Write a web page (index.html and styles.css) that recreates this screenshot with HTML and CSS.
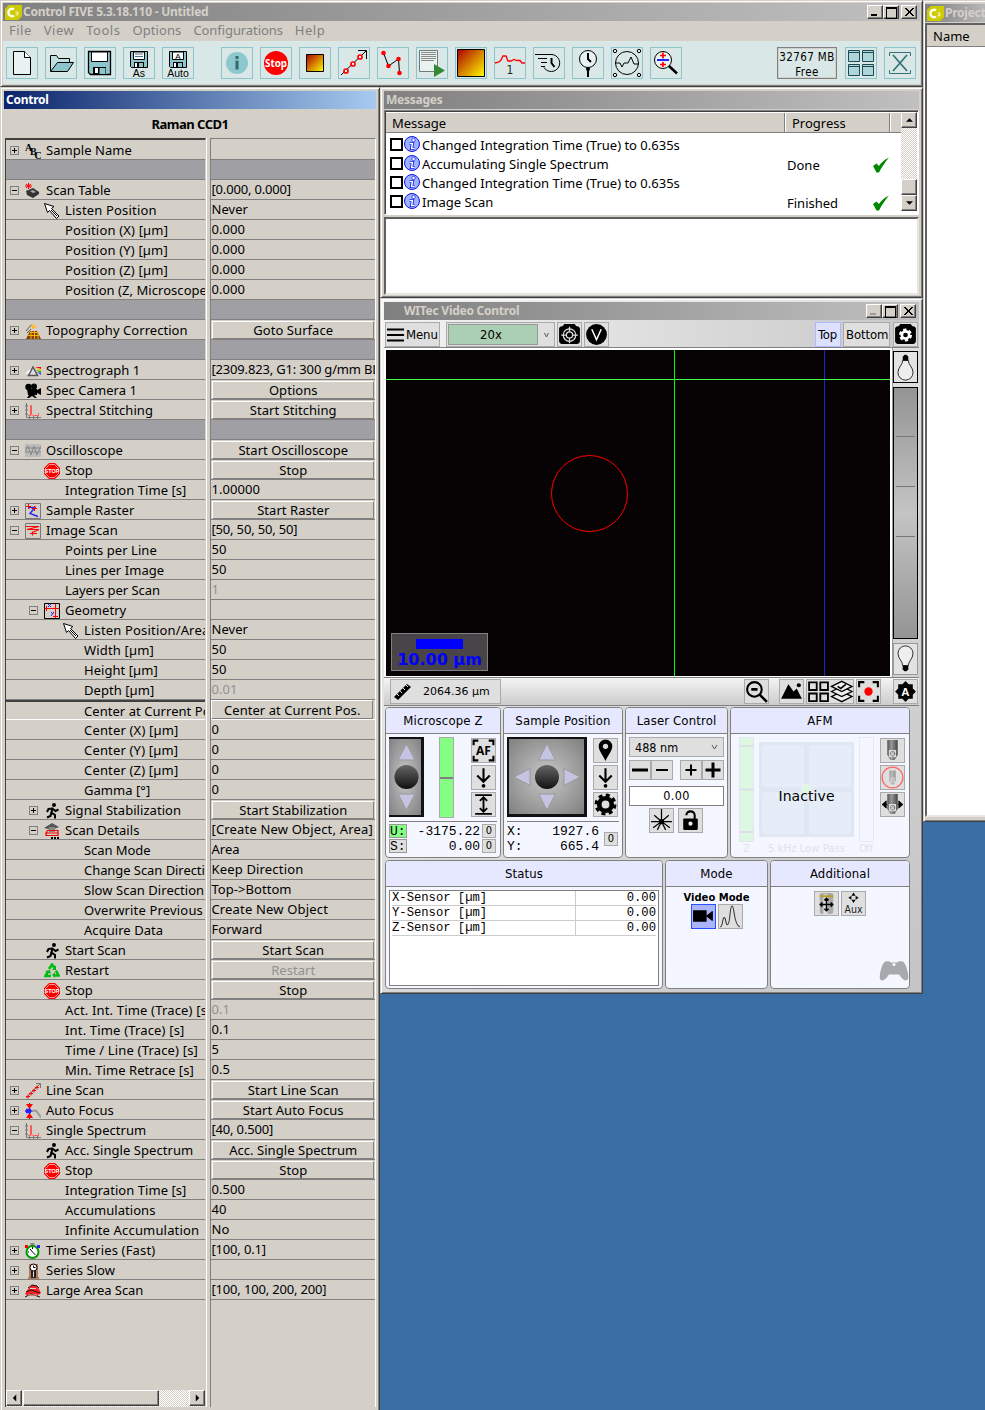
FILE: index.html
```html
<!DOCTYPE html>
<html lang="en">
<head>
<meta charset="utf-8">
<title>Control FIVE</title>
<link rel="stylesheet" href="styles.css">
</head>
<body>
<svg class="defs" width="0" height="0">
<defs>
<linearGradient id="heat" x1="0" y1="0" x2="1" y2="1"><stop offset="0" stop-color="#a00"/><stop offset="1" stop-color="#ff0"/></linearGradient>
<radialGradient id="stick" cx=".5" cy=".5" r=".7"><stop offset="0" stop-color="#c8c8c8"/><stop offset="1" stop-color="#808080"/></radialGradient>
<linearGradient id="ball" x1="0" y1="0" x2="0" y2="1"><stop offset="0" stop-color="#666"/><stop offset="1" stop-color="#111"/></linearGradient>
<linearGradient id="metal" x1="0" y1="0" x2="1" y2="0"><stop offset="0" stop-color="#555"/><stop offset=".4" stop-color="#999"/><stop offset="1" stop-color="#444"/></linearGradient>
</defs>
</svg>
<svg class="sprites">
<symbol id="abc" viewBox="0 0 16 16"><g font-family="Liberation Serif" font-weight="bold" font-size="10"><text x="0" y="8">A</text><text x="5" y="12">B</text><text x="9.500" y="16">C</text></g></symbol>
<symbol id="table" viewBox="0 0 16 16"><path d="M1 8l7-3 6 4v2l-6 4-6-3z" fill="#333"/><path d="M5 8l3-1 3 2-3 1z" fill="#aaa"/><path d="M3.500 0v6M0 3h7M1 1l5 4M6 1L1 5" stroke="red"/></symbol>
<symbol id="arrow" viewBox="0 0 16 16"><path d="M.5.5l3 9 2-2 7 8 2.500-2.500-7.500-7.500 2.500-2z" fill="#fff" stroke="#000"/><path d="M7 7l6 6" stroke="#000"/></symbol>
<symbol id="topo" viewBox="0 0 16 16"><path d="M1 16l4-8h7l4 8z" fill="#8a3d0b"/><path d="M3 12.500h11M5 9.500h8M6 8v8M9.500 8v8M13 10v6" stroke="#eb0"/><path d="M1 8l6-7M2 10l4-4" stroke="#555"/><path d="M6 2l4 2M7 5l4-2" stroke="#fb3" stroke-width="2"/></symbol>
<symbol id="prism" viewBox="0 0 16 16"><path d="M0 11l5-5v4z" fill="#fff"/><path d="M10 4h6v2z" fill="red"/><path d="M10 5l6 1v2z" fill="#fc0"/><path d="M11 7l5 1v2z" fill="#0b0"/><path d="M12 9l4 1v2z" fill="#33f"/><path d="M3.500 12.500L8 4l4.500 8.500z" fill="#ddd" stroke="#555" stroke-width="1.500"/></symbol>
<symbol id="camera" viewBox="0 0 16 16"><circle cx="3.500" cy="4" r="3.200"/><circle cx="9" cy="3.500" r="3"/><path d="M2 6h10v1l4-2v7l-4-2v2H9l3 3h-2l-3-2-3 2H2l2-3H3z"/></symbol>
<symbol id="spec" viewBox="0 0 16 16"><path d="M1.500 0v14.500H16" stroke="#777" fill="none"/><path d="M0 3h3M0 7h3M0 11h3M4.500 13v3M8.500 13v3M12.500 13v3" stroke="#777"/><path d="M3 12.500h2.500V2.500h1v9l2 1h5V10" stroke="#f55" fill="none"/></symbol>
<symbol id="osc" viewBox="0 0 16 16"><path d="M0 1h16v13H0z" fill="#bbb"/><path d="M0 9l3-6 3 9 3-9 3 9 4-9M0 5h16M0 9h16" stroke="#888" fill="none"/></symbol>
<symbol id="stop" viewBox="0 0 16 16"><path d="M5 0h6l5 5v6l-5 5H5l-5-5V5z" fill="red"/><path d="M5.500 1.500h5l4 4v5l-4 4h-5l-4-4v-5z" fill="none" stroke="#fff" stroke-width=".6"/><text x="8" y="10.200" font-family="Liberation Sans" font-weight="bold" font-size="5.500" fill="#fff" text-anchor="middle">STOP</text></symbol>
<symbol id="raster" viewBox="0 0 16 16"><path d="M.5.5h15v15H.5z" fill="none" stroke="#777"/><path d="M4 4.500h6l-5 6 8 3" fill="none" stroke="#22f" stroke-width="1.400"/><path d="M1 3.500h5M3.500 1v5M7 5.500h5M9.500 3v5" stroke="red"/></symbol>
<symbol id="iscan" viewBox="0 0 16 16"><path d="M.5.5h15v15H.5z" fill="none" stroke="#777"/><path d="M1 3.500h13L2 6.500h12L5 10.500h7M7.500 8.500v4" fill="none" stroke="red" stroke-width="1.200"/></symbol>
<symbol id="geom" viewBox="0 0 16 16"><path d="M.5.5h15v15H.5z" fill="none" stroke="#000"/><path d="M1 5.500h14M11.500 1v14M2.500 3v5M9 13.500h5" stroke="red"/><path d="M4 1l3 3M7 1L4 4M7 9l2 2M10 9l-3 4" stroke="#22f"/></symbol>
<symbol id="run" viewBox="0 0 16 16"><circle cx="10" cy="2" r="2"/><path d="M8.500 4.500L7.500 9.500 11 12v3.500M7.500 9l-1 4L3 14.500M8.500 5.500L4.500 6 3 9M9 6l2.500 2 3-1.500" stroke="#000" stroke-width="2" fill="none"/></symbol>
<symbol id="details" viewBox="0 0 16 16"><path d="M0 5l8-5 7 4-7 3z" fill="#555"/><path d="M5 4h6v5H5z" fill="#888"/><path d="M3 7.500h11v5H2l1-5M1 10h13" fill="none" stroke="#e00" stroke-width="1.200"/><path d="M7 14h2v2H7zM10 14h2v2h-2zM13 14h2v2h-2z"/></symbol>
<symbol id="recycle" viewBox="0 0 16 16"><path d="M5 6l3-4.500L10.500 5M12 7.500l2.500 5H10M7 13H1.500L4 8.500" stroke="#0b1" stroke-width="2.600" fill="none"/><path d="M12 2v5H8zM11 9v6l-3-3zM1 8l5-1 1 4z" fill="#0b1"/></symbol>
<symbol id="line" viewBox="0 0 16 16"><path d="M1 15L15 1M11 .5h4.500V5" stroke="#777" fill="none"/><path d="M1 13.500h4M3 11.500v4M4 10.500h4M6 8.500v4M7 7.500h4M9 5.500v4M10 4.500h4M12 2.500v4" stroke="red"/></symbol>
<symbol id="focus" viewBox="0 0 16 16"><path d="M4.500 0v16" stroke="#333"/><path d="M1 1h7L4.500 6zM1 15h7l-3.500-5z" fill="red"/><path d="M0 8h8M1 6.500h5M1 9.500h5" stroke="#22f" stroke-width="1.500"/><path d="M7 8l4-.5 5 7" stroke="#999" stroke-width="2" fill="none"/></symbol>
<symbol id="timer" viewBox="0 0 16 16"><path d="M5.500 0h4v3h-4z" fill="#888"/><circle cx="7.500" cy="9" r="6" fill="#fff" stroke="#090" stroke-width="2"/><path d="M7.500 9L5 6M7.500 9l3 3M7.500 4v2M3 9h1" stroke="#000"/><path d="M0 2h3v3H0z" fill="red"/><path d="M12 2h3v3h-3z" fill="#22f"/></symbol>
<symbol id="slow" viewBox="0 0 16 16"><path d="M4 1h9v13h1v2H3v-2h1z" fill="#b47858"/><path d="M6 8h5v7H6z" fill="#222"/><path d="M8.500 8v6" stroke="#ddd"/><circle cx="8.500" cy="4.500" r="3.500" fill="#fff" stroke="#000"/><path d="M8.500 2.500v2h2" stroke="#000" fill="none"/></symbol>
<symbol id="area" viewBox="0 0 16 16"><path d="M0 11l3-5 4-4h4l3 4 2 4-4 3H3z" fill="#f22"/><path d="M3 5l4-3 5 1 2 2M1 9l5-2 9 3M0 14l6-3 9 3" stroke="#111" fill="none"/><path d="M3 12h9M5 5.500h6" stroke="#d4d0c8"/></symbol>
<symbol id="logo" viewBox="0 0 18 18"><path d="M4 1h14v12l-4 4H0V5z" fill="#cc0"/><path d="M9.500 5.500a4 4 0 1 0 0 7" fill="none" stroke="#fff" stroke-width="2.500"/><path d="M11 8.500h2.500v3H11" fill="none" stroke="#fff"/></symbol>
<symbol id="info" viewBox="0 0 16 16"><circle cx="8" cy="8" r="7.500" fill="#9bb4ff" stroke="#11e"/><circle cx="9.500" cy="4" r="1.700" fill="#fff" stroke="#11e" stroke-width=".7"/><path d="M5.500 7.500h3L7.500 12.500h3" fill="none" stroke="#11e" stroke-width="3"/><path d="M5.500 7.500h3L7.500 12.500h3" fill="none" stroke="#fff" stroke-width="1.400"/></symbol>
<symbol id="check" viewBox="0 0 18 16"><path d="M1 9l3.500-2.500L7 9c3-4 5-6 10-8.500-4 5-7 9-10 15H4.500z" fill="#080"/></symbol>
<symbol id="down" viewBox="0 0 24 24"><path d="M12 3v13M6 10l6 6 6-6" fill="none" stroke="#000" stroke-width="2"/><circle cx="12" cy="20" r="1.800"/></symbol>
<symbol id="bulb" viewBox="0 0 24 32"><path d="M9 23c0-5-5-7-5-13a8 8 0 0 1 16 0c0 6-5 8-5 13z" fill="#eee" stroke="#222"/><path d="M9 23h6v4l-2 2h-2l-2-2z"/></symbol>
<symbol id="probe" viewBox="0 0 24 24"><path d="M7 2h10v14l-3 5h-4l-3-5z" fill="url(#metal)"/><path d="M9 12h6v6H9zM9 12l6 6M15 12l-6 6" fill="none" stroke="#ddd"/></symbol>
</svg>

<div class="left">
<section class="win main-win">
  <header class="bar"><svg class="logo"><use href="#logo"/></svg><span>Control FIVE 5.3.18.110 - Untitled</span><span class="btns"><i class="min"></i><i class="max"></i><i class="x"></i></span></header>
  <nav class="menu"><span>File</span><span>View</span><span>Tools</span><span class="opt">Options</span><span class="cfg">Configurations</span><span>Help</span></nav>
  <div class="tools">
    <svg class="tb" viewBox="0 0 32 32"><path d="M7.500 4.500h11l6 6v17h-17z" fill="#e8f2f0" stroke="#000"/><path d="M18.500 4.500v6h6" fill="#fff" stroke="#000"/></svg>
    <svg class="tb" viewBox="0 0 32 32"><path d="M5.500 24V8.500h6l2 3h11v4" fill="#bfdfe0" stroke="#000"/><path d="M5.500 24.500l7-9h16l-6 9z" fill="#8cc5cc" stroke="#000"/></svg>
    <svg class="tb" viewBox="0 0 32 32"><path d="M4.500 4.500h22v23h-20l-2-2z" fill="#8cc5cc" stroke="#000" stroke-width="1.300"/><path d="M7.500 5h16v9.500h-16z" fill="#fff" stroke="#000"/><path d="M9 20h13v7H9z"/><path d="M15.500 21h6v6h-6z" fill="#8cc5cc"/><path d="M11 21h3v5h-3z" fill="#fff"/></svg>
    <svg class="tb" viewBox="0 0 32 32"><path d="M7.500 4.500h17v16h-16l-1-1z" fill="#8cc5cc" stroke="#000"/><path d="M10.500 5h11v7.500h-11z" fill="#fff" stroke="#000"/><path d="M12 7h8M12 9.500h8" stroke="#478"/><path d="M11 15h10v5H11z"/><path d="M16 16h4v4h-4z" fill="#8cc5cc"/><path d="M12 16h2v4h-2z" fill="#fff"/><text class="ic" x="16" y="30">As</text></svg>
    <svg class="tb" viewBox="0 0 32 32"><path d="M7.500 4.500h17v16h-16l-1-1z" fill="#8cc5cc" stroke="#000"/><path d="M10.500 5h11v7.500h-11z" fill="#fff" stroke="#000"/><text class="ic sm" x="16" y="12">A</text><path d="M11 15h10v5H11z"/><path d="M16 16h4v4h-4z" fill="#8cc5cc"/><path d="M12 16h2v4h-2z" fill="#fff"/><text class="ic" x="16" y="30">Auto</text></svg>
    <svg class="tb gapl" viewBox="0 0 32 32"><circle cx="16" cy="16" r="11" fill="#8cc8ce"/><path d="M14.500 9h3v3h-3zM14.500 13.500h3v9h-3z" fill="#356970"/></svg>
    <svg class="tb" viewBox="0 0 32 32"><circle cx="16" cy="16" r="12" fill="red"/><text x="16" y="20" font-size="10.500" font-weight="bold" fill="#fff" text-anchor="middle" font-family="Noto Sans" textLength="22" lengthAdjust="spacingAndGlyphs">Stop</text></svg>
    <svg class="tb" viewBox="0 0 32 32"><path d="M7.500 7.500h17v17h-17z" fill="url(#heat)" stroke="#000"/></svg>
    <svg class="tb" viewBox="0 0 32 32"><path d="M3 28L28 4M20 3.500h8.500V12" fill="none" stroke="#000"/><g fill="#fff" stroke="red" stroke-width="1.700"><circle cx="8" cy="24" r="2"/><circle cx="15" cy="17" r="2"/><circle cx="22" cy="10" r="2"/></g></svg>
    <svg class="tb" viewBox="0 0 32 32"><path d="M6.500 6l5 13 10-7 1 14" fill="none" stroke="#000"/><g fill="red"><circle cx="6.500" cy="6" r="2.300"/><circle cx="11.500" cy="19" r="2.300"/><circle cx="21.500" cy="12" r="2.300"/><circle cx="22.500" cy="26" r="2.300"/></g></svg>
    <svg class="tb" viewBox="0 0 32 32"><path d="M3.500 3.500h18v21h-18z" fill="#e8f2f0" stroke="#777"/><path d="M5 5.500h15M5 7.500h15M5 9.500h15M5 11.500h15M5 13.500h13" stroke="#888"/><path d="M18 17l11 6.500L18 30z" fill="#383"/></svg>
    <svg class="tb" viewBox="0 0 32 32"><path d="M2.500 2.500h27v27h-27z" fill="url(#heat)" stroke="#000"/></svg>
    <svg class="tb" viewBox="0 0 32 32"><path d="M1 16l4-1 2-2 2-4 3 0 2 5h3l3-1.500 3 1 3 0 2 2.500h3" fill="none" stroke="red" stroke-width="1.300"/><text x="16" y="27" font-size="12" fill="#222" text-anchor="middle" font-family="DejaVu Sans Condensed">1</text></svg>
    <svg class="tb" viewBox="0 0 32 32"><path d="M2 7.500h15M5 11.500h9M8 15.500h6M8 19.500h4M10 7.500h8a8.500 8.500 0 1 1-7 13" fill="none" stroke="#000"/><path d="M18.500 11v5l3 4" stroke="#000" stroke-width="2" fill="none"/></svg>
    <svg class="tb" viewBox="0 0 32 32"><circle cx="16" cy="12" r="8.500" fill="#e8f2f0" stroke="#000"/><path d="M16 6v6l3 3M16 21v9" stroke="#000" stroke-width="2" fill="none"/><circle cx="16" cy="22" r="2"/></svg>
    <svg class="tb" viewBox="0 0 32 32"><circle cx="16" cy="16" r="11.500" fill="none" stroke="#000"/><path d="M4 16h5l2 4 2-4h4l3-6 3 7h5" fill="none" stroke="#000"/><g fill="none" stroke="#000"><circle cx="4" cy="4" r="1.700"/><circle cx="28" cy="4" r="1.700"/><circle cx="4" cy="28" r="1.700"/><circle cx="28" cy="28" r="1.700"/></g></svg>
    <svg class="tb" viewBox="0 0 32 32"><circle cx="13" cy="13" r="8.500" fill="#e8f2f0" stroke="#000"/><path d="M19 19l8 7.500" stroke="#000" stroke-width="2.500"/><path d="M7 13h12" stroke="#22f" stroke-width="2"/><path d="M10 8.500h6M13 5.500v6M10 17.500h6M13 15v5" stroke="red" stroke-width="1.700"/></svg>
    <div class="mem">32767 MB<br>Free</div>
    <svg class="tb" viewBox="0 0 32 32"><g fill="#add5da" stroke="#1d4a50"><path d="M3.500 3.500h11v11h-11zM17.500 3.500h11v11h-11zM3.500 17.500h11v11h-11zM17.500 17.500h11v11h-11z"/><path d="M3 5.500h12M17 5.500h12M3 19.500h12M17 19.500h12"/></g></svg>
    <svg class="tb last" viewBox="0 0 32 32"><path d="M5.500 9V5.500h21V9M5.500 23v3.500h21V23" fill="none" stroke="#347278"/><path d="M9 8l14 16M23 8L9 24" stroke="#347278" stroke-width="1.700"/></svg>
  </div>
</section>
<div class="cols">
<section class="win control">
  <header class="bar active"><span>Control</span></header>
  <h1>Raman CCD1</h1>
  <div class="tree">
  <div class="names">
    <p class="a"><b class="p"></b><svg><use href="#abc"/></svg>Sample Name</p>
    <p class="sep"></p>
    <p class="a"><b></b><svg><use href="#table"/></svg>Scan Table</p>
    <p class="b i w"><svg><use href="#arrow"/></svg>Listen Position</p>
    <p class="b n w">Position (X) [µm]</p>
    <p class="b n w">Position (Y) [µm]</p>
    <p class="b n w">Position (Z) [µm]</p>
    <p class="b n">Position (Z, Microscope)</p>
    <p class="sep"></p>
    <p class="a"><b class="p"></b><svg><use href="#topo"/></svg>Topography Correction</p>
    <p class="sep"></p>
    <p class="a"><b class="p"></b><svg><use href="#prism"/></svg>Spectrograph 1</p>
    <p class="a i"><svg><use href="#camera"/></svg>Spec Camera 1</p>
    <p class="a"><b class="p"></b><svg><use href="#spec"/></svg>Spectral Stitching</p>
    <p class="sep"></p>
    <p class="a"><b></b><svg><use href="#osc"/></svg>Oscilloscope</p>
    <p class="b i"><svg><use href="#stop"/></svg>Stop</p>
    <p class="b n">Integration Time [s]</p>
    <p class="a"><b class="p"></b><svg><use href="#raster"/></svg>Sample Raster</p>
    <p class="a"><b></b><svg><use href="#iscan"/></svg>Image Scan</p>
    <p class="b n">Points per Line</p>
    <p class="b n">Lines per Image</p>
    <p class="b n t">Layers per Scan</p>
    <p class="b"><b></b><svg><use href="#geom"/></svg>Geometry</p>
    <p class="c i w"><svg><use href="#arrow"/></svg>Listen Position/Area</p>
    <p class="c n w">Width [µm]</p>
    <p class="c n">Height [µm]</p>
    <p class="c n">Depth [µm]</p>
    <p class="c n sel">Center at Current Pos.</p>
    <p class="c n w">Center (X) [µm]</p>
    <p class="c n w">Center (Y) [µm]</p>
    <p class="c n w">Center (Z) [µm]</p>
    <p class="c n">Gamma [°]</p>
    <p class="b"><b class="p"></b><svg><use href="#run"/></svg>Signal Stabilization</p>
    <p class="b"><b></b><svg><use href="#details"/></svg>Scan Details</p>
    <p class="c n t">Scan Mode</p>
    <p class="c n t">Change Scan Direction</p>
    <p class="c n">Slow Scan Direction</p>
    <p class="c n w">Overwrite Previous</p>
    <p class="c n">Acquire Data</p>
    <p class="b i t"><svg><use href="#run"/></svg>Start Scan</p>
    <p class="b i"><svg><use href="#recycle"/></svg>Restart</p>
    <p class="b i"><svg><use href="#stop"/></svg>Stop</p>
    <p class="b n w">Act. Int. Time (Trace) [s]</p>
    <p class="b n w">Int. Time (Trace) [s]</p>
    <p class="b n w">Time / Line (Trace) [s]</p>
    <p class="b n">Min. Time Retrace [s]</p>
    <p class="a"><b class="p"></b><svg><use href="#line"/></svg>Line Scan</p>
    <p class="a"><b class="p"></b><svg><use href="#focus"/></svg>Auto Focus</p>
    <p class="a"><b></b><svg><use href="#spec"/></svg>Single Spectrum</p>
    <p class="b i"><svg><use href="#run"/></svg>Acc. Single Spectrum</p>
    <p class="b i"><svg><use href="#stop"/></svg>Stop</p>
    <p class="b n">Integration Time [s]</p>
    <p class="b n">Accumulations</p>
    <p class="b n w">Infinite Accumulation</p>
    <p class="a w"><b class="p"></b><svg><use href="#timer"/></svg>Time Series (Fast)</p>
    <p class="a"><b class="p"></b><svg><use href="#slow"/></svg>Series Slow</p>
    <p class="a t"><b class="p"></b><svg><use href="#area"/></svg>Large Area Scan</p>
    <div class="hscroll"><i class="sb"><svg viewBox="0 0 8 8"><path d="M6 0v8L2 4z"/></svg></i><i class="thumb"></i><i class="sb end"><svg viewBox="0 0 8 8"><path d="M2 0v8l4-4z"/></svg></i></div>
  </div>
  <div class="values">
    <p></p><p class="sep"></p><p class="g">[0.000, 0.000]</p><p>Never</p><p>0.000</p><p>0.000</p><p>0.000</p><p>0.000</p><p class="sep"></p>
    <p class="btn"><span>Goto Surface</span></p><p class="sep"></p><p class="g">[2309.823, G1: 300 g/mm BLZ]</p>
    <p class="btn"><span>Options</span></p><p class="btn"><span>Start Stitching</span></p><p class="sep"></p>
    <p class="btn"><span>Start Oscilloscope</span></p><p class="btn"><span>Stop</span></p><p>1.00000</p><p class="btn"><span>Start Raster</span></p>
    <p class="g">[50, 50, 50, 50]</p><p>50</p><p>50</p><p class="dim">1</p><p></p><p>Never</p><p>50</p><p>50</p><p class="dim">0.01</p>
    <p class="btn cur"><span>Center at Current Pos.</span></p><p>0</p><p>0</p><p>0</p><p>0</p>
    <p class="btn"><span>Start Stabilization</span></p><p class="w">[Create New Object, Area]</p><p>Area</p><p class="w">Keep Direction</p><p>Top-&gt;Bottom</p><p class="w">Create New Object</p><p>Forward</p>
    <p class="btn"><span>Start Scan</span></p><p class="btn dim"><span>Restart</span></p><p class="btn"><span>Stop</span></p>
    <p class="dim">0.1</p><p>0.1</p><p>5</p><p>0.5</p><p class="btn"><span>Start Line Scan</span></p><p class="btn"><span>Start Auto Focus</span></p><p class="g">[40, 0.500]</p>
    <p class="btn"><span>Acc. Single Spectrum</span></p><p class="btn"><span>Stop</span></p><p>0.500</p><p>40</p><p>No</p><p class="g">[100, 0.1]</p><p></p><p class="g">[100, 100, 200, 200]</p>
  </div>
  </div>
</section>
<div class="right-col">
<section class="win messages">
  <header class="bar"><span>Messages</span></header>
  <div class="mlist">
    <div class="mtable">
      <div class="mhead"><span>Message</span><span>Progress</span><span></span></div>
      <div class="mrow"><i></i><svg class="inf"><use href="#info"/></svg><span>Changed Integration Time (True) to 0.635s</span></div>
      <div class="mrow"><i></i><svg class="inf"><use href="#info"/></svg><span>Accumulating Single Spectrum</span><em>Done</em><svg class="chk"><use href="#check"/></svg></div>
      <div class="mrow"><i></i><svg class="inf"><use href="#info"/></svg><span>Changed Integration Time (True) to 0.635s</span></div>
      <div class="mrow"><i></i><svg class="inf"><use href="#info"/></svg><span>Image Scan</span><em>Finished</em><svg class="chk"><use href="#check"/></svg></div>
    </div>
    <div class="vscroll"><i class="sb"><svg viewBox="0 0 8 8"><path d="M0 6h8L4 2z"/></svg></i><i class="thumb"></i><i class="sb"><svg viewBox="0 0 8 8"><path d="M0 2h8L4 6z"/></svg></i></div>
  </div>
  <div class="mtext"></div>
</section>
<section class="win video">
  <header class="bar"><span>WITec Video Control</span><span class="btns"><i class="min off"></i><i class="max"></i><i class="x"></i></span></header>
  <div class="vtools">
    <div class="vb menu-b"><svg width="17" height="14" viewBox="0 0 17 14"><path d="M0 1.500h17M0 7h17M0 12.500h17" stroke="#000" stroke-width="2.200"/></svg>Menu</div>
    <div class="combo"><span>20x</span><svg width="7" height="6" viewBox="0 0 7 6"><path d="M1.500 1L3.500 5l2-4" fill="none" stroke="#555"/></svg></div>
    <svg class="vb" viewBox="0 0 24 24"><rect x="2" y="4" width="20" height="17" rx="3"/><path d="M7 2h10l3 4H4z"/><g fill="none" stroke="#ddd" stroke-width="1.200"><circle cx="12" cy="12.500" r="6"/><circle cx="12" cy="12.500" r="3"/><path d="M12 4.500v5M12 15.500v5M4 12.500h5M15 12.500h5"/></g></svg>
    <svg class="vb" viewBox="0 0 24 24"><circle cx="12" cy="12" r="10"/><path d="M7.500 7l4.500 10 4.500-10" fill="none" stroke="#fff" stroke-width="1.500"/></svg>
    <div class="vb top-b">Top</div><div class="vb bot-b">Bottom</div>
    <svg class="vb camg" viewBox="0 0 24 24"><rect x="2" y="4" width="20" height="17" rx="3"/><path d="M7 2h10l3 4H4z"/><circle cx="12" cy="12.500" r="5" fill="none" stroke="#fff" stroke-width="2.500" stroke-dasharray="3 2.200"/><circle cx="12" cy="12.500" r="3.500" fill="none" stroke="#fff" stroke-width="2.500"/></svg>
  </div>
  <div class="view">
    <div class="canvas"><svg width="504" height="326" viewBox="0 0 504 326"><path d="M288.500 0v326" stroke="#0f0"/><path d="M438.500 0v326" stroke="#22c"/><path d="M0 29.500h504" stroke="#0f0"/><path d="M0 29.500h504" stroke="#fff" opacity=".25"/><circle cx="203.500" cy="143.500" r="38" fill="none" stroke="#f00"/></svg>
      <div class="scale"><i></i>10.00 µm</div></div>
    <div class="side"><svg class="lamp on" viewBox="0 0 24 32"><g transform="rotate(180 12 16)"><use href="#bulb" width="24" height="32"/></g></svg><div class="dimmer"><i></i><i></i><i></i></div><svg class="lamp" viewBox="0 0 24 32"><use href="#bulb" width="24" height="32"/></svg></div>
  </div>
  <div class="vbar">
    <div class="vb meas"><svg width="20" height="18" viewBox="0 0 20 18"><path d="M1 14L14 1l4 3L5 17z"/><path d="M4 11l2 2M7 8l2 2M10 5l2 2M13 2l2 2" stroke="#ddd"/></svg>2064.36 µm</div>
    <svg class="vb mag" viewBox="0 0 24 24"><circle cx="10" cy="10" r="7" fill="none" stroke="#000" stroke-width="2"/><path d="M7 10h6M15 15l7 7" stroke="#000" stroke-width="2.500"/></svg>
    <svg class="vb mnt" viewBox="0 0 24 24"><path d="M2 19L9 5l5 7 3-3 5 10z"/><circle cx="19" cy="6" r="2"/></svg>
    <svg class="vb duo" viewBox="0 0 47 24"><g fill="none" stroke="#000" stroke-width="1.800"><path d="M3 3h7.500v7.500H3zM14 3h7.500v7.500H14zM3 14h7.500v7.500H3zM14 14h7.500v7.500H14z"/></g><g fill="#eee" stroke="#000" stroke-width="1.300"><path d="M25 17l10-5 10 5-10 5z"/><path d="M25 12l10-5 10 5-10 5z"/><path d="M25 7l10-5 10 5-10 5z"/></g><path d="M31 7l3 2 5-4" stroke="#000" stroke-width="1.500" fill="none"/></svg>
    <svg class="vb" viewBox="0 0 24 24"><path d="M3 8V3h5M16 3h5v5M21 16v5h-5M8 21H3v-5" fill="none" stroke="#000" stroke-width="2"/><circle cx="12" cy="12" r="4" fill="red"/></svg>
    <svg class="vb auto" viewBox="0 0 24 24"><path d="M12 2l3 3h4v4l3 3-3 3v4h-4l-3 3-3-3H5v-4l-3-3 3-3V5h4z"/><text x="12" y="16" font-size="11" font-weight="bold" fill="#fff" text-anchor="middle" font-family="Liberation Sans">A</text></svg>
  </div>
  <div class="panels">
    <div class="panel mz"><h2>Microscope Z</h2>
      <div class="prow">
        <svg class="joy" width="35" height="80" viewBox="0 0 35 80"><path d="M0 0h35v80H0z" fill="#111"/><path d="M0 2h32v76H0z" fill="url(#stick)"/><path d="M17.500 7l8.500 16H9zM17.500 73l8.500-16H9z" fill="#c4c4e2" stroke="#999"/><circle cx="17.500" cy="40" r="12" fill="url(#ball)"/></svg>
        <div class="zbar"></div>
        <div class="vstack"><svg class="vb" viewBox="0 0 24 24"><path d="M2.500 7V2.500H7M17 2.500h4.500V7M21.500 17v4.500H17M7 21.500H2.500V17" fill="none" stroke="#000" stroke-width="2"/><text x="12" y="16.300" font-size="11.500" font-weight="bold" text-anchor="middle" font-family="Noto Sans">AF</text></svg><svg class="vb"><use href="#down"/></svg><svg class="vb" viewBox="0 0 24 24"><path d="M4 3h16M4 21h16M12 5v14M8.500 8.500L12 5l3.500 3.500M8.500 15.500L12 19l3.500-3.500" fill="none" stroke="#000" stroke-width="1.800"/></svg></div>
      </div>
      <div class="read"><div class="num"><span class="tag on">U:</span><span class="v">-3175.22</span><span class="zero">0</span></div><div class="num"><span class="tag">S:</span><span class="v">0.00</span><span class="zero">0</span></div></div>
    </div>
    <div class="panel sp"><h2>Sample Position</h2>
      <div class="prow">
        <svg class="joy" width="80" height="80" viewBox="0 0 80 80"><path d="M0 0h80v80H0z" fill="#111"/><path d="M2 2h75v75H2z" fill="url(#stick)"/><path d="M40 7l8.500 16h-17zM40 73l8.500-16h-17zM7 40l16-8.500v17zM73 40l-16-8.500v17z" fill="#c4c4e2" stroke="#999"/><circle cx="40" cy="40" r="12" fill="url(#ball)"/></svg>
        <div class="vstack"><svg class="vb" viewBox="0 0 24 24"><path d="M12 22C9 16 5.500 12 5.500 8a6.500 6.500 0 0 1 13 0c0 4-3.500 8-6.500 14z"/><circle cx="12" cy="8" r="2.500" fill="#ddd"/></svg><svg class="vb"><use href="#down"/></svg><svg class="vb" viewBox="0 0 24 24"><circle cx="12" cy="12" r="6" fill="none" stroke="#000" stroke-width="4.500"/><circle cx="12" cy="12" r="9" fill="none" stroke="#000" stroke-width="3" stroke-dasharray="3.800 3.270"/></svg></div>
      </div>
      <div class="read two"><div class="xy"><div class="num"><span>X:</span><span>1927.6</span></div><div class="num"><span>Y:</span><span>665.4</span></div></div><span class="zero">0</span></div>
    </div>
    <div class="panel lc"><h2>Laser Control</h2>
      <div class="sel-box">488 nm<svg width="7" height="6" viewBox="0 0 7 6"><path d="M1 1l2.500 4L6 1" fill="none" stroke="#555"/></svg></div>
      <div class="pm"><svg viewBox="0 0 20 18"><path d="M2 9h16" stroke="#000" stroke-width="3"/></svg><svg viewBox="0 0 20 18"><path d="M4 9h12" stroke="#000" stroke-width="2"/></svg><svg class="pl" viewBox="0 0 20 18"><path d="M4.500 9h11M10 3.500v11" stroke="#000" stroke-width="2"/></svg><svg viewBox="0 0 20 18"><path d="M2.500 9h15M10 1.500v15" stroke="#000" stroke-width="3"/></svg></div>
      <div class="inp">0.00</div>
      <div class="lrow"><svg class="vb" viewBox="0 0 24 24"><path d="M12 1v10M2 13h20M5 7l7 6 7-6M4 19l8-6 8 6M8 21l4-8 4 8" fill="none" stroke="#000" stroke-width="1.200"/><circle cx="12" cy="13" r="2.500"/></svg><svg class="vb" viewBox="0 0 24 24"><rect x="5" y="10" width="14" height="11" rx="1"/><path d="M8 7c0-5 8-5 8 0v4" fill="none" stroke="#000" stroke-width="2"/><circle cx="12" cy="15" r="2" fill="#eee"/></svg></div>
    </div>
    <div class="panel afm"><h2>AFM</h2>
      <div class="prow">
        <svg class="afmpad" width="137" height="117" viewBox="0 0 137 117"><path d="M.5.5h14v104H.5z" fill="#ddf7e2" stroke="#e4e8ec"/><path d="M0 9h15M0 52.500h15M0 95h15" stroke="#dde0ea" stroke-width="2"/><rect x="20" y="5" width="95" height="95" fill="#dfe7f2"/><g fill="#e6edf8"><rect x="23" y="8" width="42" height="42" rx="3"/><rect x="70" y="8" width="42" height="42" rx="3"/><rect x="23" y="55" width="42" height="42" rx="3"/><rect x="70" y="55" width="42" height="42" rx="3"/></g><circle cx="67.500" cy="52.500" r="5" fill="#dcf6e0" stroke="#eef3f8"/><path d="M120.500.5h14v104h-14z" fill="none" stroke="#e6e8f2"/><g font-family="DejaVu Sans" font-size="10" fill="#e0e2ea"><text x="4" y="115">Z</text><text x="29" y="115" textLength="77">5 kHz Low Pass</text><text x="120" y="115" textLength="14">Off</text></g><text x="67.500" y="64" text-anchor="middle" font-family="DejaVu Sans" font-size="14" textLength="56">Inactive</text></svg>
        <div class="vstack"><svg class="vb"><use href="#probe"/></svg><svg class="vb pale" viewBox="0 0 24 24"><circle cx="12" cy="12" r="10" fill="none" stroke="#f66" stroke-width="1.200"/><g transform="translate(4.800 4) scale(.6 .7)" opacity=".5"><use href="#probe" width="24" height="24"/></g></svg><svg class="vb" viewBox="0 0 24 24"><use href="#probe" width="24" height="24"/><path d="M7 12H3M17 12h4M6 8.500L2 12l4 3.500zM18 8.500l4 3.500-4 3.500z" stroke="#000" stroke-width=".7"/></svg></div>
      </div>
    </div>
  </div>
  <div class="panels second">
    <div class="panel st"><h2>Status</h2><div class="sensors"><div><span>X-Sensor [µm]</span><span>0.00</span></div><div><span>Y-Sensor [µm]</span><span>0.00</span></div><div><span>Z-Sensor [µm]</span><span>0.00</span></div></div></div>
    <div class="panel mo"><h2>Mode</h2><strong>Video Mode</strong><div class="mrow2"><svg class="vb on" viewBox="0 0 24 24"><path d="M2 6h13v11H2zM15 11l5-4h1v9h-1l-5-4z"/></svg><svg class="vb" viewBox="0 0 24 24"><path d="M2 22c3 0 2-9 4-9s1 7 3 7C12 20 11 2 13.500 2S15 21 21 22" fill="none" stroke="#333"/></svg></div></div>
    <div class="panel ad"><h2>Additional</h2><div class="mrow2"><svg class="vb" viewBox="0 0 24 24"><rect x="5.500" y="2" width="13" height="20" rx="2" fill="#aaa"/><path d="M9 3h4v19H9z" fill="#ddd"/><path d="M5.500 5h13" stroke="#b8a030" stroke-width="2"/><path d="M12 7v12M6 13h12M10 9l2-2 2 2M10 17l2 2 2-2M8 11l-2 2 2 2M16 11l2 2-2 2" fill="none" stroke="#000" stroke-width="1.400"/></svg><svg class="vb" viewBox="0 0 24 24"><path d="M12 1.500l2 3h-4zM12 11.500l2-3h-4zM7 6.500l3-2v4zM17 6.500l-3-2v4z"/><text x="12" y="21" font-size="10" fill="#222" text-anchor="middle" font-family="DejaVu Sans Condensed">Aux</text></svg></div>
      <svg class="pad" viewBox="0 0 30 20"><path d="M6 1q4-1 6 1h6q2-2 6-1 3 2 5 12 1 7-2 7-3 0-7-6H10q-4 6-7 6-3 0-2-7Q3 3 6 1z" fill="#a8a9ae"/><circle cx="15" cy="4" r="1.500" fill="#fff"/></svg></div>
  </div>
</section>
</div>
</div>
</div>
<section class="win project">
  <header class="bar"><svg class="logo"><use href="#logo"/></svg><span>Project</span></header>
  <div class="plist"><div>Name</div></div>
</section>
</body>
</html>
```
FILE: styles.css
```css
*{box-sizing:border-box}
body{margin:0;width:985px;height:1410px;overflow:hidden;background:#3a6ea5;display:flex;font:13px/20px "Noto Sans",sans-serif;color:#000}
p,h1,h2{margin:0}
i,em{font-style:normal}
.defs{position:absolute}
.sprites{display:none}
.left{width:923px;flex:none}
.win{background:#d4d0c8;border:1px solid;border-color:#d4d0c8 #404040 #404040 #d4d0c8;box-shadow:inset 1px 1px #fff,inset -1px -1px #808080;padding:3px;overflow:hidden}
.bar{height:18px;display:flex;align-items:center;background:linear-gradient(90deg,#808080,#c0c0c0);color:#d4d0c8;font-weight:bold;font-size:12px;line-height:18px;padding-left:2px;white-space:nowrap;letter-spacing:-.25px}
.bar.active{background:linear-gradient(90deg,#0a246a,#a6caf0);color:#fff}
.logo{width:17px;height:17px;margin-right:1px;flex:none}
.btns{margin-left:auto;display:flex;padding-right:3px}
.btns i{width:16px;height:14px;background:#d4d0c8;border:1px solid;border-color:#fff #404040 #404040 #fff;box-shadow:inset -1px -1px #808080;display:flex}
.btns i.x{margin-left:2px}
.btns i::before{content:"";margin:auto}
.btns .min::before{width:6px;height:2px;background:#000;margin:8px 0 0 3px}
.btns .off::before{background:#999}
.btns .max::before{width:9px;height:9px;border:1px solid #000;border-top-width:2px;margin:1px 0 0 2px}
.btns .x::before{width:9px;height:8px;margin:2px 0 0 3px;background:linear-gradient(45deg,transparent 42%,#000 42% 58%,transparent 58%),linear-gradient(-45deg,transparent 42%,#000 42% 58%,transparent 58%)}
.main-win{height:87px;padding:2px 2px 1px 2px}
.menu{height:20px;display:flex;color:#808080;padding-left:6px;line-height:19px;letter-spacing:.5px}
.menu span{margin-right:12px}
.menu .opt{letter-spacing:.1px}
.menu .cfg{letter-spacing:-.08px}
.tools{background:#d9e8e6;height:43px;display:flex;padding:6px 0 0 3px}
.tb{width:32px;height:32px;box-shadow:inset 0 0 0 1px #8cc5cc;margin-right:7px;flex:none}
.tb.gapl{margin-left:20px}
.ic{font:10.500px "Liberation Sans";text-anchor:middle}
.ic.sm{font-size:8px}
.mem{width:60px;height:32px;border:1px solid #808080;box-shadow:inset 1px 1px #d4d0c8,inset -1px -1px #d4d0c8;margin:0 8px 0 88px;font:11.500px/15px "DejaVu Sans Condensed";letter-spacing:.4px;text-align:center;padding-top:2px;white-space:nowrap;flex:none}
.cols{display:flex;height:1323px}
.control{width:380px;height:1325px;flex:none}
.control h1{font-size:13px;line-height:30px;height:29px;text-align:center;letter-spacing:-.5px}
.tree{display:flex;height:1269px;margin-left:1px}
.names{width:202px;border:1px solid #404040;border-width:2px 1px 0 1px;border-right-color:#d4d0c8;box-shadow:1px 0 #fff;display:flex;flex-direction:column;overflow:hidden}
.names p,.values p{height:20px;border-bottom:1px solid #808080;flex:none;white-space:nowrap;overflow:hidden;line-height:19px;letter-spacing:.05px}
.names p{display:flex;align-items:center;padding:2px 0 0 4px}
.names p.b{padding-left:23px}
.names p.a.i{padding-left:19px}
.names p.b.i{padding-left:38px}
.names p.b.n{padding-left:59px}
.names p.c.i{padding-left:57px}
.names p.c.n{padding-left:78px}
.tree p.w{letter-spacing:.17px}
.tree p.t{letter-spacing:-.06px}
.tree p.g{letter-spacing:-.17px}
.names svg{width:16px;height:16px;margin-right:5px;flex:none}
.names b{width:9px;height:9px;border:1px solid #808080;margin-right:6px;flex:none;background:linear-gradient(#000,#000) center/5px 1px no-repeat}
.names b.p{background:linear-gradient(#000,#000) center/5px 1px no-repeat,linear-gradient(#000,#000) center/1px 5px no-repeat}
.tree p.sep{background:#a0a0a4}
.names p.sel{border-top:2px solid #404040;border-bottom-color:#fff;padding-top:1px}
.values{width:166px;margin-left:4px;border-left:1px solid #808080;border-right:1px solid #fff;border-top:1px solid #808080;padding-top:1px;overflow:hidden}
.values p.btn{padding:1px 1px 0}
.btn span{display:block;height:18px;border:1px solid;border-color:#fff #808080 #808080 #fff;text-align:center;line-height:16px}
.values p.cur{border-bottom-color:#fff;padding:0 2px 0 0}
.values p.cur span{height:19px;line-height:18px}
.dim{color:#909090}
.hscroll{margin:auto 0 0;height:17px;display:flex;background:repeating-conic-gradient(#fff 0 25%,#d4d0c8 0 50%) 0 0/2px 2px}
.sb,.thumb{width:16px;height:16px;background:#d4d0c8;border:1px solid;border-color:#fff #404040 #404040 #fff;box-shadow:inset -1px -1px #808080;flex:none;display:flex;align-items:center;justify-content:center}
.names .sb svg,.sb svg{width:7px;height:8px;margin:0}
.hscroll .thumb{width:136px;margin-left:1px}
.sb.end{margin-left:auto}
.right-col{width:543px}
.messages{height:211px}
.mlist{margin-top:1px;height:105px;border:1px solid;border-color:#808080 #fff #fff #808080;box-shadow:inset 1px 1px #404040;padding:2px 1px 2px 2px;background:#fff;display:flex}
.mtable{width:514px;flex:none}
.mhead{display:flex;background:#d4d0c8;height:20px;border-bottom:1px solid #808080;margin:0 0 2px -1px}
.mhead span{border-right:1px solid #808080;box-shadow:1px 0 #fff;padding-left:6px;width:399px;line-height:21px;flex:none}
.mhead span+span{width:105px;padding-left:7px}
.mhead span:last-child{width:11px;border:0;box-shadow:none}
.mrow{height:19px;display:flex;align-items:center;white-space:nowrap}
.mrow i{width:13px;height:13px;border:2px solid #000;margin-left:3px;flex:none}
.inf{width:16px;height:16px;margin:0 2px 2px 1px;flex:none}
.mrow span{width:365px;flex:none}
.mrow em{width:85px;padding-top:2px;flex:none}
.chk{width:18px;height:16px;margin-top:2px}
.vscroll{width:16px;display:flex;flex-direction:column;background:repeating-conic-gradient(#fff 0 25%,#d4d0c8 0 50%) 0 0/2px 2px;margin-top:-1px;margin-bottom:1px}
.vscroll .thumb{margin-top:auto}
.mtext{margin-top:2px;height:78px;background:#fff;border:2px solid;border-color:#606060 #e8e6e0 #e8e6e0 #606060}
.video{height:696px;background:linear-gradient(135deg,#f4f4f4,#c4c4c4)}
.video .bar{padding-left:20px}
.vtools{height:28px;display:flex;align-items:center;background:linear-gradient(90deg,#f4f4f4,#c8c8c8);border-bottom:1px solid #808080;font:13px "DejaVu Sans Condensed";padding:2px 0 0 1px}
.vb{width:25px;height:25px;border:1px solid #aaa;background:#dfdfdf;flex:none}
svg.vb{border:0;box-shadow:inset 0 0 0 1px #aaa}
.menu-b{width:55px;display:flex;align-items:center;gap:2px;padding-left:1px;letter-spacing:-.1px}
.combo{width:109px;height:25px;margin:0 2px 0 6px;border:1px solid #aaa;background:#dfdfdf;display:flex;align-items:center;padding:1px;gap:5px}
.combo span{width:90px;height:21px;background:#aacfb2;border:1px solid #999;text-align:center;line-height:19px;padding-right:4px}
.vtools svg+svg{margin-left:2px}
.top-b{width:26px;margin-left:206px;background:#dde0ff;border-color:#b0b8ff;line-height:23px;padding-left:2px;letter-spacing:-.2px}
.bot-b{width:47px;margin:0 3px 0 2px;line-height:23px;padding-left:2px;letter-spacing:-.1px}
.view{height:330px;display:flex;border-bottom:1px solid #808080}
.canvas{width:508px;background:#070204;border:2px solid #fff;border-bottom-width:1px;position:relative;flex:none;height:329px;overflow:hidden}
.canvas svg{display:block}
.scale{position:absolute;left:5px;top:283px;width:97px;height:38px;background:#484448;border:1px solid #808080;color:#00f;font:bold 16px/17px "DejaVu Sans";text-align:center;padding-top:5px;white-space:nowrap}
.scale i{display:block;width:47px;height:10px;background:#00f;margin:0 auto 2px}
.side{border-left:1px solid #999;padding-top:3px;display:flex;flex-direction:column;align-items:flex-start;gap:4px}
.lamp{width:25px;height:32px;border:1px solid #999;background:#e2e2e2;flex:none}
.lamp.on{border-color:#000}
.dimmer{width:25px;height:252px;border:1px solid #000;background:linear-gradient(#949494,#c4c4c4 50%,#949494);padding-top:48px;display:flex;flex-direction:column;gap:49px}
.dimmer i{height:1px;background:#777;margin:0 2px;flex:none}
.vbar{height:28px;display:flex;align-items:center;padding-left:6px;background:linear-gradient(#f4f4f4,#ccc);border-bottom:1px solid #808080}
.meas{width:111px;display:flex;align-items:center;gap:10px;padding-left:2px;font:11px "DejaVu Sans"}
.mag{margin:0 10px 0 243px}
.mnt{margin-right:2px}
.duo{width:48px;margin-right:2px}
.auto{margin-left:12px}
.panels{display:flex;gap:2px;padding:1px 0 0 1px}
.panel{height:151px;border:1px solid #808080;border-radius:4px;background:#f4f7ff;overflow:hidden;padding:0 3px;flex:none}
.panel h2{font:13px/25px "DejaVu Sans Condensed";letter-spacing:.15px;height:26px;background:#e6e8ff;border-bottom:1px solid #808080;margin:0 -3px 3px;text-align:center;white-space:nowrap}
.second .panel{height:129px}
.second{padding-top:2px}
.mz{width:116px}.sp{width:120px}.lc{width:103px}.afm{width:180px}.st{width:278px}.mo{width:103px}.ad{width:140px}
.prow{display:flex;height:84px}
.joy,.afmpad{flex:none}
.afmpad{margin-left:5px}
.vstack{display:flex;flex-direction:column;gap:2px;padding-top:1px;margin-left:auto}
.zbar{width:15px;height:81px;margin-left:15px;border:1px solid #aaa;background:linear-gradient(#808080,#808080) center/100% 2px no-repeat #84ff84}
.mz .vstack,.sp .vstack,.afm .vstack{margin-right:1px}
.read{border-top:1px solid #808080;padding-top:2px;font:13px/15px "Liberation Mono",monospace}
.num{display:flex;height:15px;justify-content:space-between}
.num .tag{width:18px;height:14px;border:1px solid #999;background:#dfdfdf;line-height:13px;flex:none}
.num .tag.on{background:#84ff84}
.num .v{flex:1;text-align:right;padding-right:2px}
.zero{width:14px;height:14px;border:1px solid #aaa;background:#dfdfdf;font:11px/12px "DejaVu Sans Condensed";text-align:center;margin-right:1px;flex:none}
.two{display:flex;align-items:center;justify-content:space-between}
.xy{width:92px}
.sel-box{height:20px;border:1px solid #aaa;background:#dfdfdf;display:flex;justify-content:space-between;align-items:center;padding:0 5px;font:12.500px "DejaVu Sans Condensed"}
.pm{display:flex;margin:3px 0 6px}
.pm svg{width:22px;height:20px;border:1px solid #aaa;background:#dfdfdf;flex:none}
.pm .pl{margin-left:7px}
.inp{height:20px;border:1px solid #808080;background:#fff;text-align:center;font:12.500px/18px "DejaVu Sans Condensed";letter-spacing:.4px}
.lrow{display:flex;gap:4px;justify-content:center;margin:2px 1px 0 0}
.sensors{height:96px;border:1px solid #808080;background:#fff;padding:0 2px;font:12.200px/14px "Liberation Mono",monospace}
.sensors div{display:flex;border-bottom:1px solid #ccc;height:15px;line-height:15px}
.sensors span{width:184px;border-right:1px solid #ccc;flex:none}
.sensors span+span{width:80px;border:0;text-align:right}
.mo strong{display:block;text-align:center;font:bold 10px/13px "DejaVu Sans";margin-top:3px;white-space:nowrap;padding-top:1px}
.mrow2{display:flex;gap:2px;justify-content:center}
.ad .mrow2{padding-top:1px}
.mo svg.vb.on{background:#a9b4fa;box-shadow:inset 0 0 0 1px #2a4fff}
.ad{position:relative}
.pad{position:absolute;right:0;bottom:7px;width:30px;height:21px}
.project{width:70px;height:822px;flex:none;padding:3px 1px}
.project .bar{margin-right:-4px}
.plist{height:794px;margin-top:1px;background:#fff;border:2px solid;border-color:#606060 #fff #e8e6e0 #606060}
.plist div{height:22px;background:#d4d0c8;border-bottom:1px solid #808080;padding-left:6px;line-height:22px}
```
